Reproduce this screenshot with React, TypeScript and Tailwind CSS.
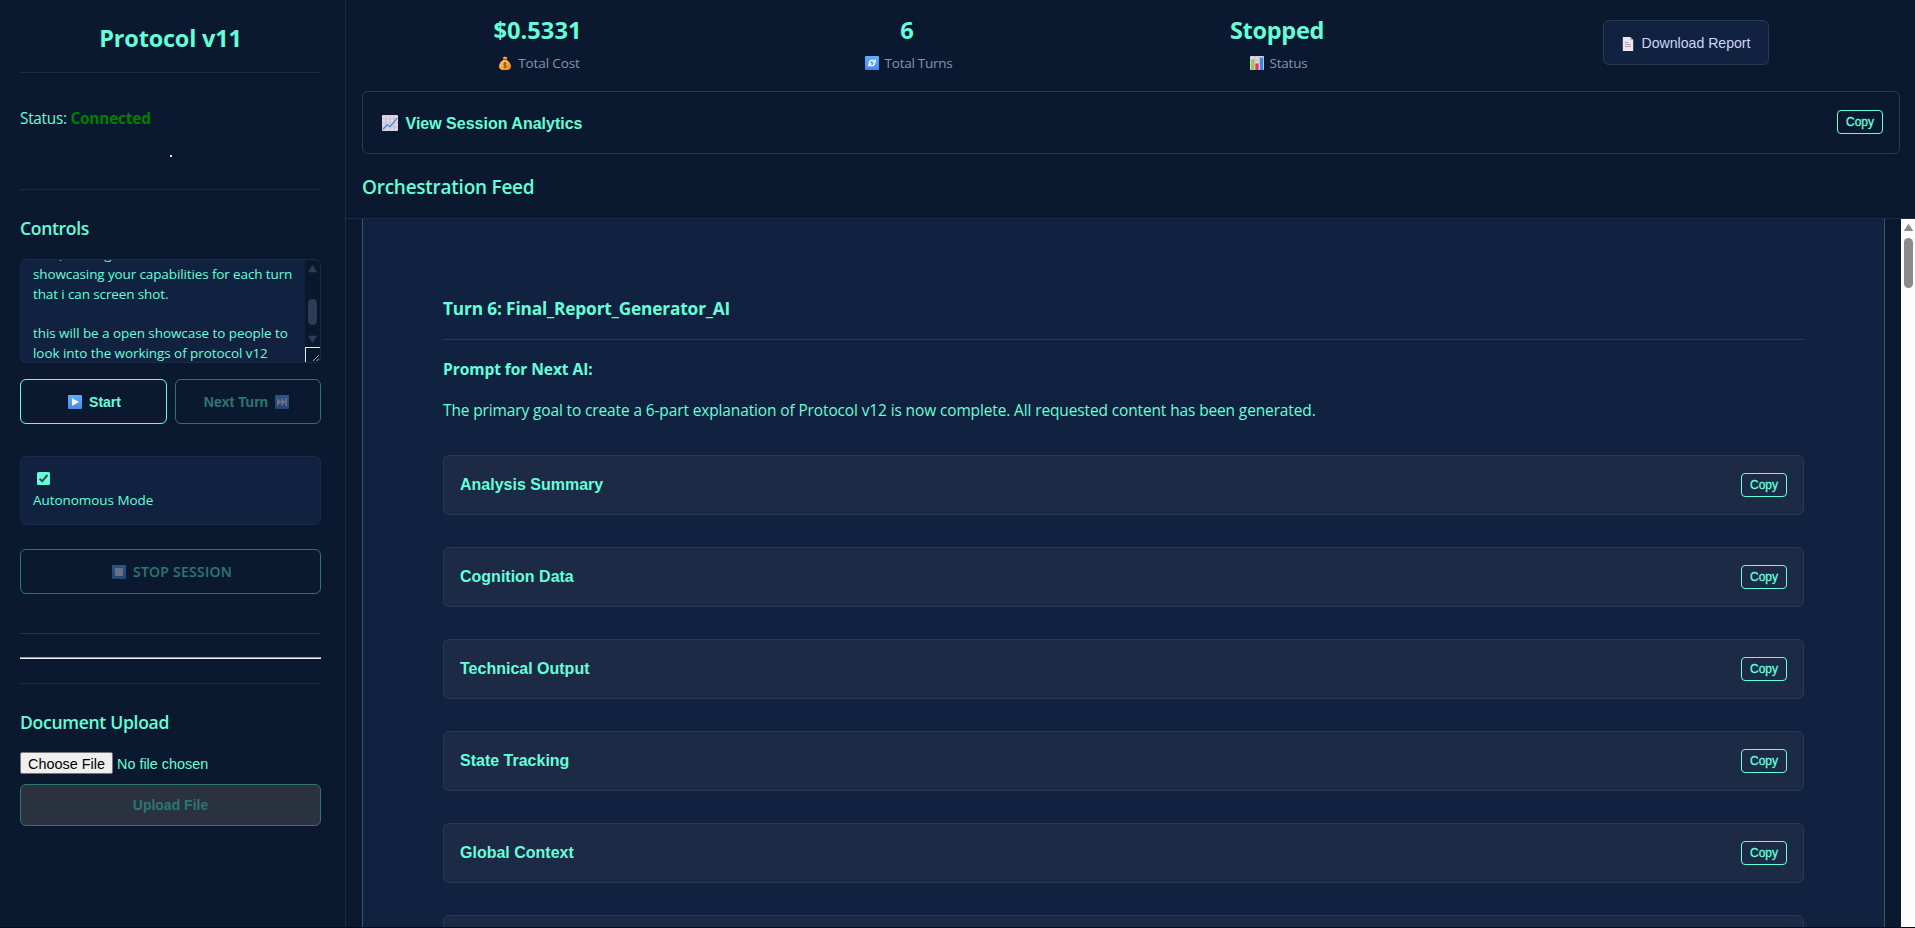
import type { ReactNode } from "react";

const sections = [
  "Analysis Summary",
  "Cognition Data",
  "Technical Output",
  "State Tracking",
  "Global Context",
];

function BlueTile({ children }: { children: ReactNode }) {
  return (
    <svg viewBox="0 0 14 14" className="size-3.5 shrink-0">
      <defs>
        <linearGradient id="tile" x1="0" y1="0" x2="0" y2="1">
          <stop offset="0" stopColor="#5cb0ff" />
          <stop offset="1" stopColor="#4a86e8" />
        </linearGradient>
      </defs>
      <rect width="14" height="14" rx="1" fill="url(#tile)" />
      {children}
    </svg>
  );
}

function PlayIcon() {
  return (
    <BlueTile>
      <path d="M4 3v8l7-4z" fill="#fbf3ff" />
    </BlueTile>
  );
}

function NextTrackIcon() {
  return (
    <BlueTile>
      <path d="M2 3v8l4.500-4zM6.200 3v8l4.500-4zM10.300 3h1.700v8h-1.700z" fill="#fbf3ff" />
    </BlueTile>
  );
}

function StopIcon() {
  return (
    <BlueTile>
      <path d="M3 3h8v8H3z" fill="#fbf3ff" />
    </BlueTile>
  );
}

function RefreshIcon() {
  return (
    <BlueTile>
      <path
        d="M4.300 7.200A2.800 2.800 0 0 1 8.800 4.900M9.700 6.800A2.800 2.800 0 0 1 5.200 9.100"
        fill="none"
        stroke="#fbf3ff"
        strokeWidth="1.500"
      />
      <path d="M10.800 2.800v4H6.900zM3.200 11.200v-4h3.900z" fill="#fbf3ff" />
    </BlueTile>
  );
}

function MoneyBagIcon() {
  return (
    <svg viewBox="0 0 14 14" className="size-3.5 shrink-0">
      <defs>
        <linearGradient id="bag" x1="0" y1="0" x2="1" y2="1">
          <stop offset="0" stopColor="#ffc04a" />
          <stop offset="0.5" stopColor="#fbb040" />
          <stop offset="1" stopColor="#e8703a" />
        </linearGradient>
      </defs>
      <path d="M4.6.9 6 1.3 7 .2l1 1.1 1.5-.4-1 2.2h-3z" fill="#f9a640" />
      <path d="M5 3h4v1H5z" fill="#8a4a2c" />
      <path d="M5.2 4h3.6c2.4 1.7 4.2 3.7 4.2 6.2 0 2.5-1.7 3.8-3.6 3.8H4.6C2.700 14 1 12.700 1 10.200 1 7.700 2.800 5.700 5.200 4z" fill="url(#bag)" />
      <path
        d="M8.500 7.500C8 6.900 5.600 6.700 5.600 8.100s2.900.8 2.900 2.200-2.500 1.300-3 .4M7 5.900v6.200"
        fill="none"
        stroke="#7a3f24"
        strokeWidth="0.9"
      />
    </svg>
  );
}

function BarChartIcon() {
  return (
    <svg viewBox="0 0 14 14" className="size-3.5 shrink-0">
      <rect width="14" height="14" rx="0.8" fill="#ddd5e2" />
      <path d="M0 4.500h14M0 9h14M4.700 0v14M9.300 0v14" stroke="#bfb4c8" strokeWidth="0.6" />
      <path d="M1 3.500h3.200V14H1z" fill="#8fd14f" />
      <path d="M5.400 7.500h3.200V14H5.400z" fill="#e8336d" />
      <path d="M10 1.500h3.200V14H10z" fill="#2d8be0" />
    </svg>
  );
}

function PageIcon() {
  return (
    <svg viewBox="0 0 12 14" className="h-3.5 w-3 shrink-0">
      <path d="M.8 0h7.400l3 3v11H.8z" fill="#eee6f2" />
      <path d="M8.200 0v3h3z" fill="#b9aec4" />
      <path d="M3 5.500h3.500M3 7.500h6M3 9.500h6" stroke="#a79bb5" strokeWidth="0.9" />
    </svg>
  );
}

function TrendIcon() {
  return (
    <svg viewBox="0 0 16 16" className="size-4 shrink-0">
      <rect width="16" height="16" rx="1" fill="#e0d6e6" />
      <path d="M0 4h16M0 8h16M0 12h16M4 0v16M8 0v16M12 0v16" stroke="#c3b7cc" strokeWidth="0.7" />
      <path d="M.8 14.500 5 9.800l3.200 1.700L15.300 3.200" fill="none" stroke="#3a8fdd" strokeWidth="1.300" />
    </svg>
  );
}

function CopyButton() {
  return (
    <button className="flex h-6 w-[46px] shrink-0 items-center justify-center rounded-[4px] border border-[#64ffda] text-[12px] leading-4 [-webkit-text-stroke:0.3px_#64ffda]">
      Copy
    </button>
  );
}

function Metric({ value, label, icon, valueClass, labelClass }: {
  value: string;
  label: string;
  icon: ReactNode;
  valueClass: string;
  labelClass: string;
}) {
  return (
    <div className="flex flex-col items-center gap-[7px] pt-3.5">
      <div className={`font-bold leading-8 ${valueClass}`}>{value}</div>
      <div className="flex items-center gap-1.5 pl-[3px] text-[13.500px] leading-5 text-[#8892b0]">
        {icon}
        <span className={labelClass}>{label}</span>
      </div>
    </div>
  );
}

function Rule({ className }: { className: string }) {
  return <div className={`h-px shrink-0 ${className}`} />;
}

function Sidebar() {
  return (
    <aside className="flex w-[346px] shrink-0 flex-col border-r border-[#1c2a46] pl-5 pr-6 pt-[22px]">
      <h1 className="mb-[18px] text-center text-[23.500px] font-bold leading-8 tracking-[-0.2px]">Protocol v11</h1>
      <Rule className="bg-[#1c2a46]" />
      <p className="mt-[34px] text-[15.400px] leading-6">
        <span className="tracking-[-0.3px]">Status: </span>
        <span className="font-bold tracking-[-0.2px] text-[#008000]">Connected</span>
      </p>
      <div className="mt-6 size-0.5 self-center bg-[#e6e6e6]" />
      <Rule className="mt-8 bg-[#1c2a46]" />

      <h2 className="mt-[26px] text-[17.600px] font-semibold leading-6 tracking-[-0.35px]">Controls</h2>
      <div className="mt-[19px] flex h-[104px] shrink-0 overflow-hidden rounded-[6px] border border-[#1c2a46] bg-[#112240]">
        <div className="flex min-w-0 flex-1 flex-col justify-end overflow-hidden whitespace-pre pl-3 text-[13.500px] leading-[19.600px] tracking-[-0.12px]">
          <p>turn, making a</p>
          <p>showcasing your capabilities for each turn</p>
          <p>that i can screen shot.</p>
          <p> </p>
          <p className="tracking-[-0.07px]">this will be a open showcase to people to</p>
          <p className="-mb-[3px] leading-[21.600px] tracking-[-0.07px]">look into the workings of protocol v12</p>
        </div>
        <div className="flex w-[15px] shrink-0 flex-col bg-[#0a182e]">
          <svg viewBox="0 0 15 87" className="h-[87px] w-[15px]" fill="#2f3b57">
            <path d="M7.500 5 11.500 12h-8z" strokeLinejoin="round" stroke="#2f3b57" strokeWidth="0.6" />
            <rect x="3" y="39" width="9" height="26" rx="4.500" />
            <path d="M7.500 83 3.500 76h8z" strokeLinejoin="round" stroke="#2f3b57" strokeWidth="0.6" />
          </svg>
          <div className="h-[15px] border-l border-t border-[#e8e8ee]">
            <svg viewBox="0 0 14 14" className="size-3.5" stroke="#b9bfc9" strokeWidth="0.9">
              <path d="M7 13 13 7M10.500 13 13 10.500" />
            </svg>
          </div>
        </div>
      </div>

      <div className="mt-4 grid h-[45px] shrink-0 grid-cols-[147px_146px] gap-2 font-['Liberation_Sans',sans-serif] text-sm font-bold">
        <button className="flex items-center justify-center gap-[7px] rounded-[6px] border border-[#64ffda] pl-0.5 pt-px">
          <PlayIcon />
          Start
        </button>
        <button className="flex items-center justify-center gap-[7px] rounded-[6px] border border-[#64ffda] pr-[3px] pt-px opacity-40">
          Next Turn
          <NextTrackIcon />
        </button>
      </div>

      <div className="mt-8 flex h-[69px] shrink-0 flex-col rounded-[6px] border border-[#1c2a46] bg-[#112240] pl-3 pt-[15px]">
        <svg viewBox="0 0 13 13" className="ml-1 size-[13px] shrink-0">
          <rect width="13" height="13" rx="1.500" fill="#64ffda" />
          <path d="M2.600 6.800 5.200 9.300 10.400 3" fill="none" stroke="#3b4a4a" strokeWidth="2" />
        </svg>
        <p className="mt-[5px] text-[13.500px] leading-5 tracking-[-0.05px]">Autonomous Mode</p>
      </div>

      <button className="mt-6 flex h-[45px] shrink-0 items-center justify-center gap-[7px] rounded-[6px] border border-[#64ffda] pl-[3px] text-sm font-semibold tracking-[0.25px] opacity-40">
        <StopIcon />
        STOP SESSION
      </button>

      <Rule className="mt-[39px] bg-[#2b303c]" />
      <div className="mt-[23px] h-0.5 shrink-0 border-t border-[#9a9a9a] bg-[#eeeeee]" />
      <Rule className="mt-6 bg-[#1c2a46]" />

      <h2 className="mt-[26px] text-[17.600px] font-semibold leading-6 tracking-[-0.33px]">Document Upload</h2>
      <div className="mt-[18px] flex h-[22px] shrink-0 items-center gap-1 font-['Liberation_Sans',sans-serif] text-[14.400px] leading-5">
        <button className="flex h-[22px] w-[93px] items-center justify-center rounded-[2px] border border-[#767676] bg-[#efefef] pt-0.5 text-black">
          Choose File
        </button>
        <span className="pt-0.5">No file chosen</span>
      </div>
      <button className="mt-2.5 flex h-[42px] shrink-0 items-center justify-center rounded-[6px] border border-[#2e7573] bg-[#29323e] font-['Liberation_Sans',sans-serif] text-sm font-bold text-[#2e7573]">
        Upload File
      </button>
    </aside>
  );
}

export default function App() {
  return (
    <div className="flex h-[928px] w-[1915px] overflow-hidden border-b border-[#040c1c] bg-[#0a192f] font-['Open_Sans',sans-serif] text-[#64ffda]">
      <Sidebar />

      <main className="flex min-w-0 flex-1 flex-col">
        <header className="grid h-[91px] shrink-0 grid-cols-[369px_370px_370px_447px] pl-[7px]">
          <Metric value="$0.5331" label="Total Cost" icon={<MoneyBagIcon />} valueClass="text-[23.700px]" labelClass="tracking-[-0.1px]" />
          <Metric value="6" label="Total Turns" icon={<RefreshIcon />} valueClass="text-[23.700px]" labelClass="tracking-[-0.27px]" />
          <Metric value="Stopped" label="Status" icon={<BarChartIcon />} valueClass="text-[23.500px] tracking-[-0.3px]" labelClass="tracking-[-0.22px]" />
          <div className="flex justify-center pt-5">
            <button className="flex h-[45px] w-[166px] items-center justify-center gap-2 rounded-[6px] border border-[#2a3854] bg-[#112240] pl-px pt-0.5 font-['Liberation_Sans',sans-serif] text-[14.100px] text-[#ccd6f6]">
              <PageIcon />
              Download Report
            </button>
          </div>
        </header>

        <section className="ml-4 mr-[15px] flex h-[63px] shrink-0 items-center justify-between rounded-[6px] border border-[#2a3854] pb-px pl-[19px] pr-4 font-['Liberation_Sans',sans-serif]">
          <div className="flex items-center gap-[7.500px] pt-0.5 text-base font-bold leading-6">
            <TrendIcon />
            <span className="pt-0.5">View Session Analytics</span>
          </div>
          <CopyButton />
        </section>

        <h2 className="mt-[19px] pl-4 text-[19px] font-semibold leading-7 tracking-[-0.25px]">Orchestration Feed</h2>
        <Rule className="mt-[17px] bg-[#1c2a46]" />

        <div className="flex min-h-0 flex-1 overflow-hidden">
          <article className="mx-4 min-w-0 flex-1 border-x border-[#35586b] bg-[#112240] px-20 pt-[78px]">
            <h3 className="text-[17.300px] font-bold leading-6 tracking-[-0.16px]">Turn 6: Final_Report_Generator_AI</h3>
            <Rule className="mt-[18px] bg-[#2a3854]" />
            <h4 className="mt-[17px] text-[15.600px] font-bold leading-6 tracking-[-0.1px]">Prompt for Next AI:</h4>
            <p className="mt-[17px] whitespace-nowrap text-[15.500px] leading-6 tracking-[-0.136px]">
              The primary goal to create a 6-part explanation of Protocol v12 is now complete. All requested content has been generated.
            </p>
            <div className="mt-[33px] flex flex-col gap-8">
              {sections.map((title) => (
                <div
                  key={title}
                  className="flex h-[60px] shrink-0 items-center justify-between rounded-[6px] border border-[#2a3854] bg-[#1c2a46] px-4 font-['Liberation_Sans',sans-serif]"
                >
                  <span className="text-base font-bold leading-6">{title}</span>
                  <CopyButton />
                </div>
              ))}
              <div className="h-[60px] shrink-0 rounded-[6px] border border-[#2a3854] bg-[#1c2a46]" />
            </div>
          </article>
          <svg viewBox="0 0 14 708" className="h-[708px] w-3.5 shrink-0 bg-[#fcfcfc]" fill="#8b8b8b">
            <path d="M7.500 5.500 11.500 11.500h-8z" stroke="#8b8b8b" strokeLinejoin="round" />
            <rect x="3" y="19" width="9" height="50" rx="4.500" />
          </svg>
        </div>
      </main>
    </div>
  );
}
